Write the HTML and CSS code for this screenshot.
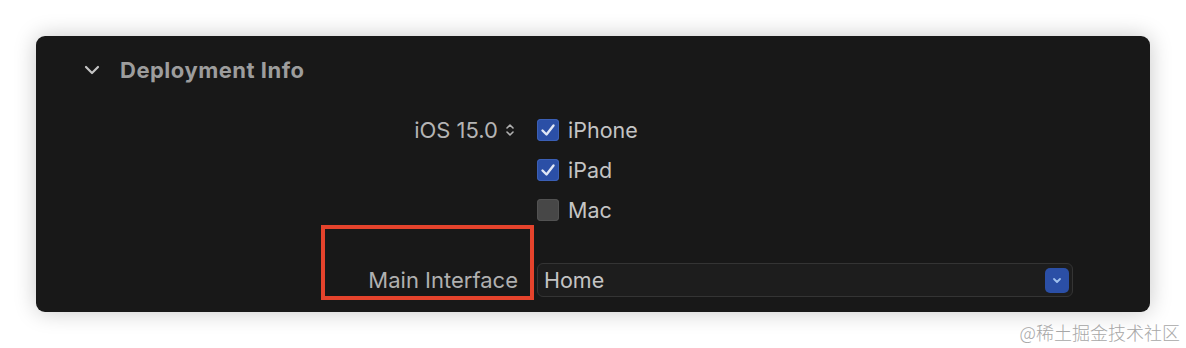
FILE: index.html
```html
<!DOCTYPE html>
<html>
<head>
<meta charset="utf-8">
<link rel="stylesheet" href="styles.css">
</head>
<body>
<div class="panel">
  <div class="header">
    <svg class="chev" width="16" height="10" viewBox="0 0 16 10"><path d="M2 2 L8 8 L14 2" fill="none" stroke="#c4c4c4" stroke-width="2.2" stroke-linecap="round" stroke-linejoin="round"/></svg>
    <span class="title">Deployment Info</span>
  </div>
  <div class="grid">
    <div class="label">iOS 15.0<svg class="stepper" width="10" height="16" viewBox="0 0 10 16"><path d="M2 6 L5 3 L8 6 M2 10 L5 13 L8 10" fill="none" stroke="#b0b0b0" stroke-width="1.6" stroke-linecap="round" stroke-linejoin="round"/></svg></div>
    <div class="check"><span class="box on"><svg width="22" height="22" viewBox="0 0 22 22"><path d="M5.5 11.5 L9.5 15.5 L16.5 6.5" fill="none" stroke="#dfe6f5" stroke-width="2.4" stroke-linecap="round" stroke-linejoin="round"/></svg></span>iPhone</div>
    <div></div>
    <div class="check"><span class="box on"><svg width="22" height="22" viewBox="0 0 22 22"><path d="M5.5 11.5 L9.5 15.5 L16.5 6.5" fill="none" stroke="#dfe6f5" stroke-width="2.4" stroke-linecap="round" stroke-linejoin="round"/></svg></span>iPad</div>
    <div></div>
    <div class="check"><span class="box"></span>Mac</div>
    <div class="label main">Main Interface</div>
    <div class="popup"><span>Home</span><span class="pbtn"><svg width="10" height="7" viewBox="0 0 10 7"><path d="M2 2 L5 5 L8 2" fill="none" stroke="#9fc0ee" stroke-width="1.8" stroke-linecap="round" stroke-linejoin="round"/></svg></span></div>
  </div>
  <div class="mark"></div>
</div>
<div class="watermark">@稀土掘金技术社区</div>
</body>
</html>
```
FILE: styles.css
```css
html, body {
  margin: 0;
  padding: 0;
  background: #ffffff;
  width: 1186px;
  height: 348px;
  overflow: hidden;
  font-family: Inter, "Liberation Sans", sans-serif;
}
.panel {
  position: relative;
  margin: 36px 0 0 36px;
  width: 1114px;
  height: 276px;
  box-sizing: border-box;
  background: #181818;
  border-radius: 9px;
  box-shadow: 0 0 22px rgba(0,0,0,0.22);
  padding-top: 20px;
}
.header {
  display: flex;
  align-items: center;
  height: 28px;
  padding-left: 48px;
  gap: 20px;
}
.chev { display: block; }
.title {
  font-size: 22px;
  font-weight: 700;
  color: #9d9d9d;
  letter-spacing: 0.5px;
}
.grid {
  display: grid;
  grid-template-columns: 480px 1fr;
  grid-template-rows: 40px 40px 40px 70px;
  column-gap: 21px;
  margin-top: 26px;
}
.label {
  display: flex;
  align-items: center;
  justify-content: flex-end;
  font-size: 22px;
  color: #b4b4b4;
  gap: 7px;
}
.stepper { display: block; margin-right: 1px; }
.check {
  display: flex;
  align-items: center;
  gap: 9px;
  font-size: 21.5px;
  color: #c4c4c4;
}
.box {
  width: 22px;
  height: 22px;
  border-radius: 4px;
  background: #474747;
  box-shadow: inset 0 0 0 1px #525252;
  display: block;
}
.box.on {
  background: #2b4fa6;
  box-shadow: inset 0 0 0 1px #3b5fb5;
}
.box svg { display: block; }
.label.main {
  grid-row: 4;
  align-self: end;
  height: 34px;
  margin-bottom: 3px;
  margin-right: -2px;
  color: #b0b0b0;
}
.popup {
  grid-row: 4;
  grid-column: 2;
  align-self: end;
  margin-bottom: 3px;
  width: 536px;
  height: 34px;
  box-sizing: border-box;
  border: 1px solid #343434;
  border-radius: 6px;
  background: #1d1d1d;
  display: flex;
  align-items: center;
  justify-content: space-between;
  padding: 0 3px 0 6px;
  font-size: 21.5px;
  color: #c4c4c4;
}
.pbtn {
  width: 24px;
  height: 25px;
  border-radius: 5px;
  background: #2b4fa6;
  display: flex;
  align-items: center;
  justify-content: center;
}
.pbtn svg { display: block; }
.mark {
  position: absolute;
  left: 285px;
  top: 189px;
  width: 213px;
  height: 75px;
  box-sizing: border-box;
  border: 4px solid #e5432c;
}
.watermark {
  text-align: right;
  padding-right: 6px;
  margin-top: 7px;
  font-family: "Noto Sans CJK SC", sans-serif;
  font-weight: 300;
  font-size: 18px;
  color: #a8a8a8;
}
```
